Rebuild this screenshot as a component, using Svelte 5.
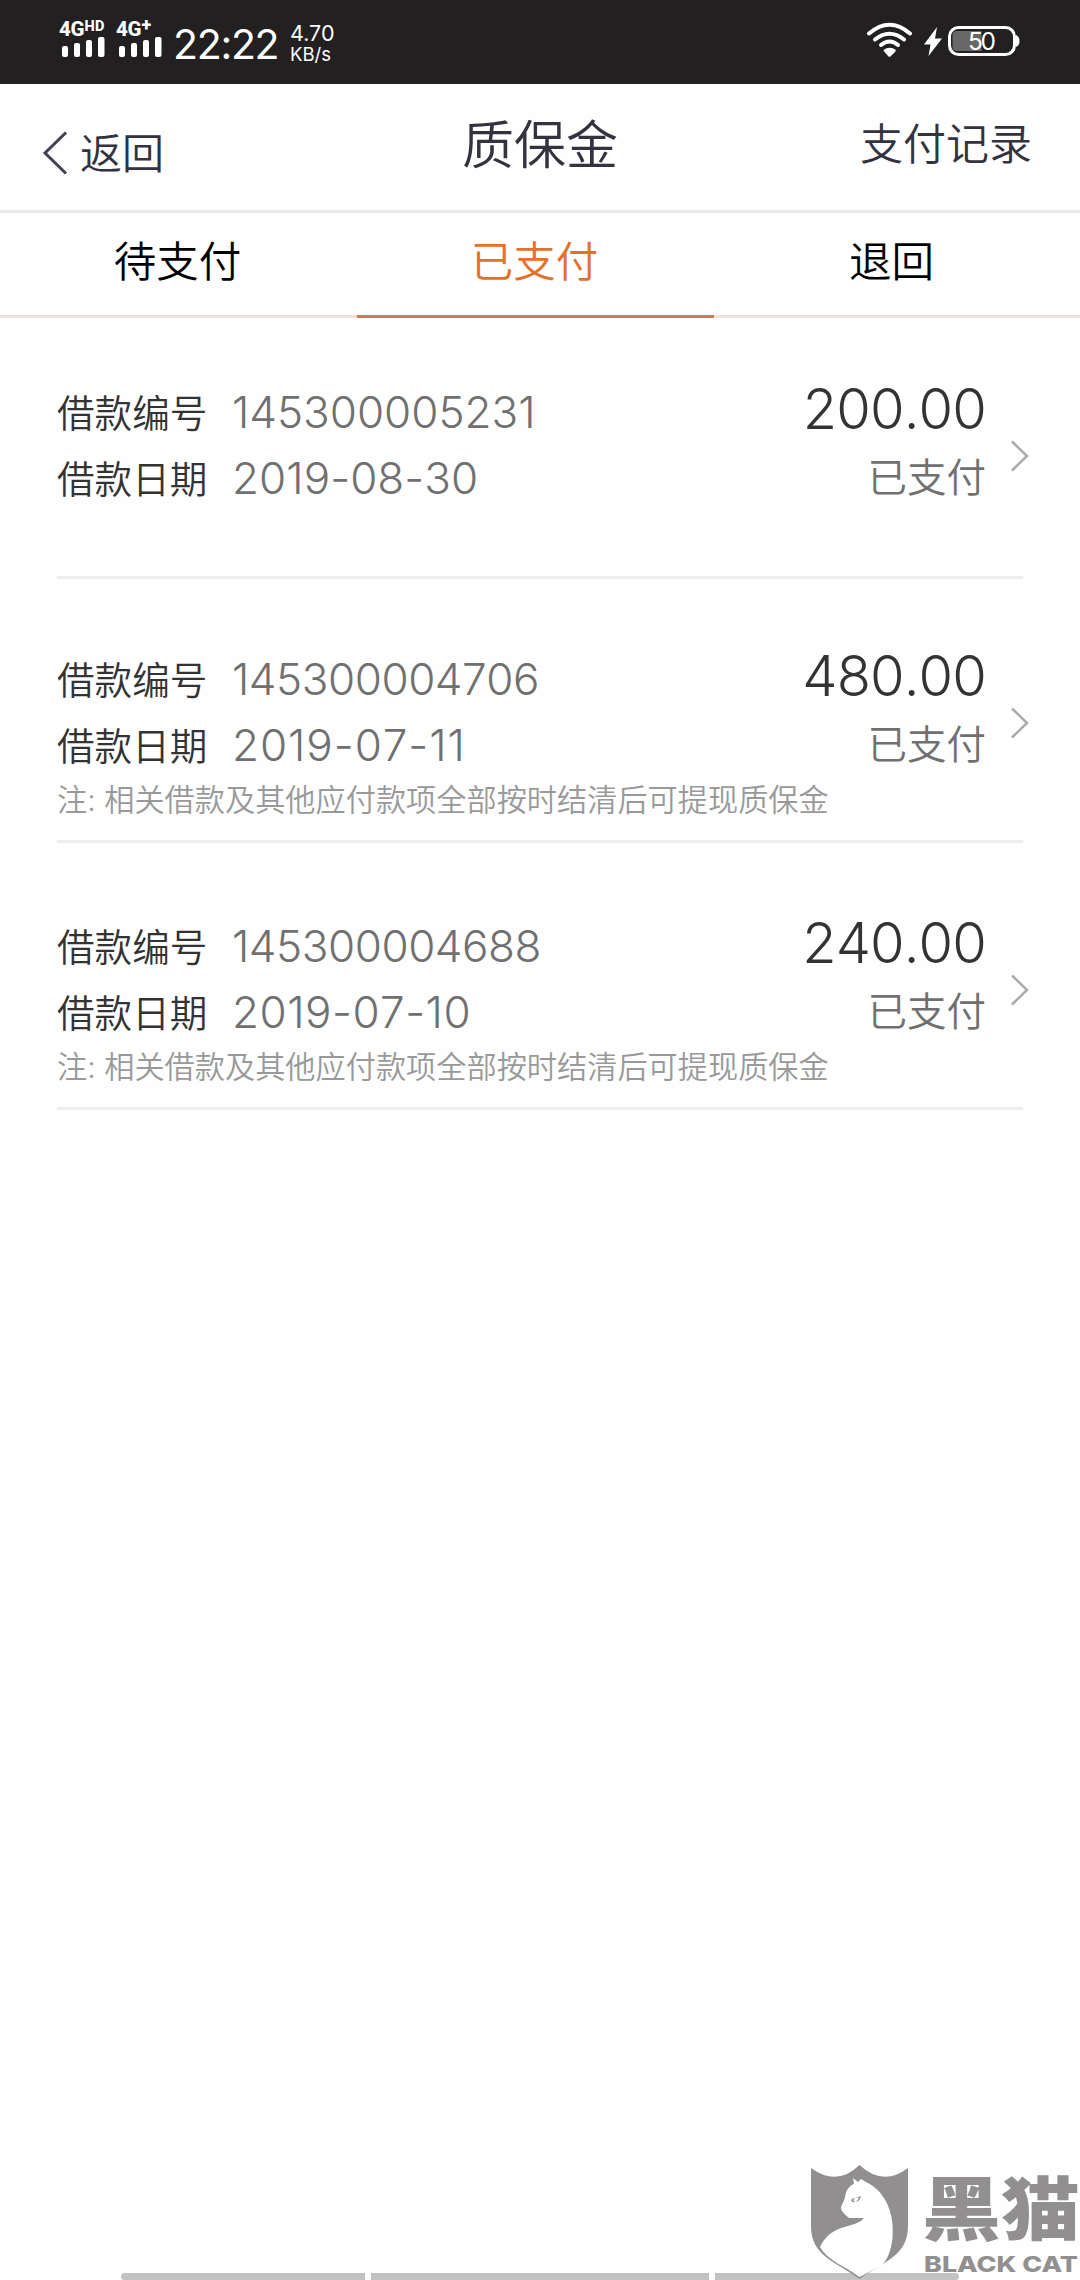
<script lang="ts">
	type Loan = {
		id: string;
		date: string;
		amount: string;
		status: string;
		note?: string;
	};

	const tabs = ['待支付', '已支付', '退回'];
	const note = '相关借款及其他应付款项全部按时结清后可提现质保金';

	const loans: Loan[] = [
		{ id: '145300005231', date: '2019-08-30', amount: '200.00', status: '已支付' },
		{ id: '145300004706', date: '2019-07-11', amount: '480.00', status: '已支付', note },
		{ id: '145300004688', date: '2019-07-10', amount: '240.00', status: '已支付', note }
	];

	let active = $state(1);

	// the font's 1 is narrow, so open up the tracking a bit for each one
	function tracking(text: string, base: number) {
		const ones = text.split('1').length - 1;
		return `${(base + ones * 0.45).toFixed(2)}px`;
	}
</script>

{#snippet bars()}
	<svg class="bars" width="44" height="21" viewBox="0 0 44 21" fill="#fff">
		<rect x="0" y="9" width="6" height="11" rx="2" />
		<rect x="12" y="6" width="6" height="14" rx="2" />
		<rect x="24" y="3" width="6" height="17" rx="2" />
		<rect x="36" y="0" width="6.5" height="20" rx="2" />
	</svg>
{/snippet}

<div class="screen">
	<div class="statusBar">
		<div class="signal">
			<span class="net">4G<sup>HD</sup></span>
			{@render bars()}
		</div>
		<div class="signal second">
			<span class="net">4G<sup class="plus">+</sup></span>
			{@render bars()}
		</div>
		<span class="clock">22:22</span>
		<div class="speed"><span>4.70</span><span class="unit">KB/s</span></div>
		<svg class="power" width="156" height="40" viewBox="0 0 156 40">
			<g fill="none" stroke="#fff" stroke-width="4" stroke-linecap="round">
				<path d="M3 15.5Q23.500 -2 44 15.500" />
				<path d="M9 21.500Q23.500 10 38 21.500" />
				<path d="M15 27Q23.500 20 32 27" />
			</g>
			<path d="M17.500 32Q23.500 27.500 30 32L29 34L24.700 38.300Q23.500 39.300 22.300 38.300L18.500 34Z" fill="#fff" />
			<path d="M71 9L58 26.500H64.500L62.500 38L76 20.500H69Z" fill="#fff" />
			<rect x="83.500" y="9.500" width="65" height="27" rx="9" fill="none" stroke="#fff" stroke-width="3" />
			<path d="M91 13H115.500V33H91Q86.500 33 86.500 28V18Q86.500 13 91 13Z" fill="#696868" />
			<path d="M150 17Q153.500 18.500 153.500 23T150 29Z" fill="#fff" />
			<text class="level" x="102" y="32" font-size="24.500" textLength="28" fill="#fff">50</text>
		</svg>
	</div>

	<header>
		<button class="back">
			<svg width="26" height="44" viewBox="0 0 26 44" fill="none" stroke="#40404f" stroke-width="3">
				<path d="M24 1.500L3 22L24 42.500" />
			</svg>
			<span>返回</span>
		</button>
		<h1>质保金</h1>
		<button class="history">支付记录</button>
	</header>

	<nav>
		{#each tabs as tab, i}
			<button class="tab" class:active={active === i} onclick={() => (active = i)}>{tab}</button>
		{/each}
	</nav>

	<main>
		{#each loans as loan}
			<section class="loan">
				<div class="info">
					<div class="line">
						<span class="label">借款编号</span>
						<span class="value" style:letter-spacing={tracking(loan.id, -0.9)}>{loan.id}</span>
					</div>
					<div class="line">
						<span class="label">借款日期</span>
						<span class="value" style:letter-spacing={tracking(loan.date, -0.4)}>{loan.date}</span>
					</div>
					{#if loan.note}
						<p class="note">注: {loan.note}</p>
					{/if}
				</div>
				<div class="result">
					<span class="amount">{loan.amount}</span>
					<span class="state">{loan.status}</span>
				</div>
				<svg class="arrow" width="18" height="32" viewBox="0 0 18 32" fill="none" stroke="#aaa" stroke-width="2.500">
					<path d="M1 1.500L16 16L1 30.500" />
				</svg>
			</section>
		{/each}
	</main>

	<div class="navHints"><i></i><i></i><i></i></div>

	<svg class="blackCat" width="272" height="116" viewBox="0 0 272 116">
		<path
			d="M3 4Q29 23 51.500 1Q75 23 100 4V62C100 92 76 97 51.500 115C27 97 3 92 3 62Z"
			fill="#918f90"
		/>
		<path
			d="M45 14L50 18L53 15L58 18C76 26 87 48 84.500 74C83 89 78 97 74 101L51.500 113C35 101 19 96 12 83C21 64 36 64 49 59Q54 57 56 54L41 54Q37 51 34 47C31 42 36 39 37 33C38 26 41 22 46 20Z"
			fill="#fff"
		/>
		<path d="M43 36Q44 34 47 34L45 36L47 38Q44 39 43 36ZM48 34L53 32Q52 37 48 38L51 34Z" fill="#918f90" />
		<text class="catName" x="114" y="71" font-size="69" textLength="158" lengthAdjust="spacingAndGlyphs">黑猫</text>
		<text class="catLatin" x="116" y="108" font-size="22" textLength="154" lengthAdjust="spacingAndGlyphs">BLACK CAT</text>
	</svg>
</div>

<style>
	:global(body) {
		background: #fefefe;
	}

	.screen {
		position: relative;
		display: flex;
		flex-direction: column;
		width: 1080px;
		height: 2280px;
		overflow: hidden;
		background: #fefefe;
		font-family: Inter, 'Noto Sans CJK SC', sans-serif;
		font-weight: 350;
	}

	button {
		padding: 0;
		border: 0;
		background: none;
		font: inherit;
	}

	.statusBar {
		display: flex;
		flex: none;
		align-items: flex-start;
		box-sizing: border-box;
		height: 84px;
		padding: 18px 58px 0 60px;
		background: #222021;
		color: #fff;
	}

	.signal {
		display: flex;
		flex-direction: column;
		width: 48px;
	}

	.signal.second {
		margin-left: 9px;
	}

	.net {
		height: 19px;
		margin-left: -1px;
		font: 800 20.5px/23px Roboto, sans-serif;
		letter-spacing: -0.2px;
		white-space: nowrap;
	}

	sup {
		font-size: 14.5px;
		line-height: 0;
		letter-spacing: 0.5px;
		vertical-align: 5px;
	}

	.plus {
		font-size: 18px;
	}

	.bars {
		margin: 0 0 0 2px;
	}

	.clock {
		margin-left: 8px;
		font-size: 41px;
		font-weight: 400;
		line-height: 52px;
		letter-spacing: -1.3px;
		width: 117px;
		white-space: nowrap;
	}

	.speed {
		display: flex;
		flex-direction: column;
		padding-top: 4px;
		font-size: 21.5px;
		font-weight: 400;
		line-height: 22px;
	}

	.unit {
		font-size: 18.5px;
		line-height: 20px;
	}

	.power {
		margin: 0 0 0 auto;
	}

	.level {
		font-weight: 400;
	}

	header {
		display: grid;
		grid-template-columns: 1fr auto 1fr;
		flex: none;
		height: 126px;
		padding: 0 48px 0 42px;
		border-bottom: 3px solid #e9e9e9;
		color: #333340;
	}

	.back {
		display: flex;
		gap: 12px;
		align-items: center;
		margin-top: 11px;
		color: inherit;
		font-size: 42px;
	}

	.back span {
		padding-bottom: 4px;
	}

	h1 {
		margin: 0 -3px 0 3px;
		font-size: 52px;
		font-weight: inherit;
		line-height: 124px;
	}

	.history {
		justify-self: end;
		padding-bottom: 12px;
		color: inherit;
		font-size: 43px;
	}

	nav {
		display: flex;
		flex: none;
		height: 102px;
		border-bottom: 3px solid #eee0da;
	}

	.tab {
		box-sizing: border-box;
		width: 357px;
		height: 105px;
		padding: 0 2px 11px 0;
		border-bottom: 3px solid transparent;
		color: #000;
		font-size: 42.5px;
	}

	.tab.active {
		border-color: #d17a46;
		color: #e3702b;
	}

	main {
		padding: 0 57px;
	}

	.loan {
		display: flex;
		box-sizing: border-box;
		height: 261px;
		padding-top: 61px;
		border-bottom: 3px solid #eee;
	}

	.loan:nth-child(2) {
		height: 264px;
		padding-top: 67px;
	}

	.loan:nth-child(3) {
		height: 267px;
		padding-top: 70px;
	}

	.info {
		flex: 1;
		min-width: 0;
	}

	.line {
		display: flex;
		align-items: center;
		height: 66px;
	}

	.label {
		width: 175px;
		padding-bottom: 4px;
		color: #333;
		font-size: 37.6px;
	}

	.value {
		color: #707070;
		font-size: 44px;
		font-kerning: none;
	}

	.note {
		margin: 0;
		color: #999;
		font-size: 30.2px;
		line-height: 44px;
		white-space: nowrap;
	}

	.result {
		display: flex;
		flex: none;
		flex-direction: column;
		align-items: flex-end;
		width: 180px;
		margin-right: 24px;
	}

	.amount {
		margin-right: 1px;
		color: #333;
		font-size: 56px;
		font-weight: 300;
		font-kerning: none;
		line-height: 60px;
		letter-spacing: -0.9px;
	}

	.state {
		margin: 11px 1px 0 0;
		color: #707070;
		font-size: 39.5px;
		line-height: 56px;
	}

	.arrow {
		flex: none;
		margin: 61px -6px 0 0;
	}

	.navHints {
		display: flex;
		gap: 6px;
		margin: auto 121px 0;
	}

	.navHints i {
		width: 244px;
		height: 7px;
		background: #c2c2c2;
	}

	.navHints i:nth-child(2) {
		width: 338px;
	}

	.navHints i:first-child {
		border-radius: 4px 0 0 4px;
	}

	.navHints i:last-child {
		border-radius: 0 4px 4px 0;
	}

	/* watermark lies over the page corner */
	.blackCat {
		position: absolute;
		right: 0;
		bottom: 0;
		overflow: visible;
	}

	.catName {
		fill: #918f90;
		font-family: Inter, 'Noto Sans CJK SC', sans-serif;
		font-weight: 900;
	}

	.catLatin {
		fill: #918f90;
		font-family: Inter, sans-serif;
		font-weight: 800;
	}
</style>
